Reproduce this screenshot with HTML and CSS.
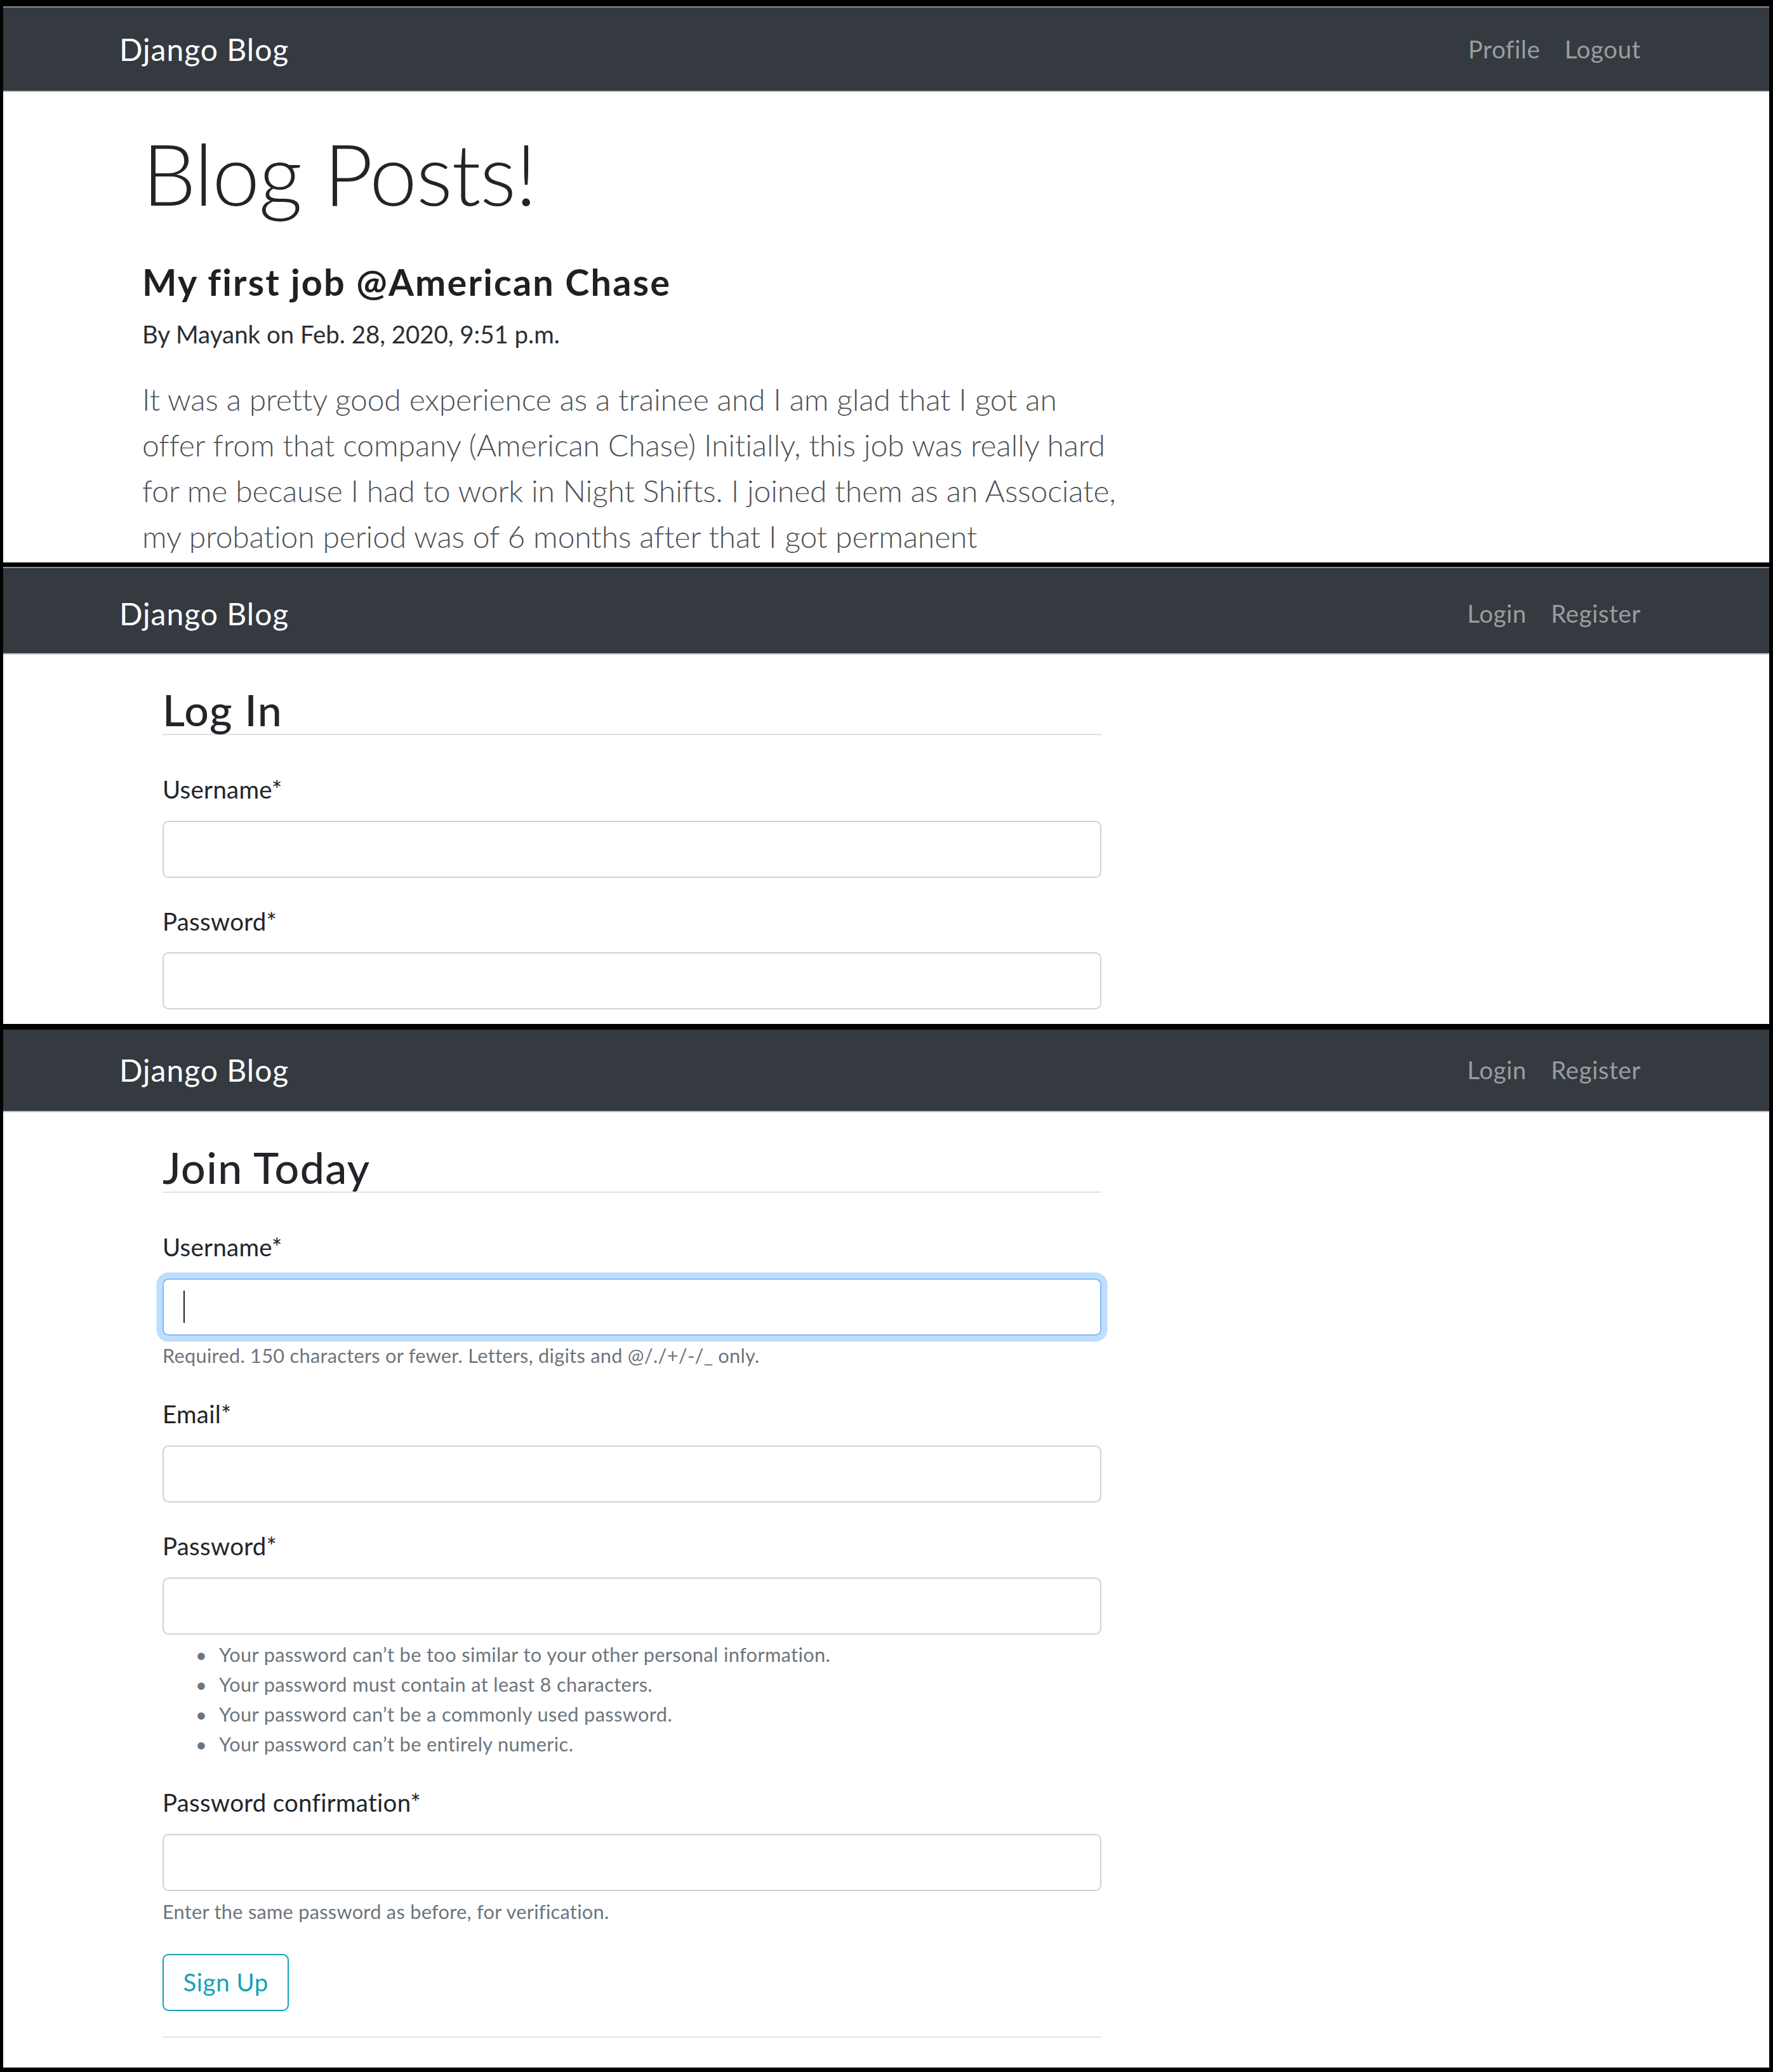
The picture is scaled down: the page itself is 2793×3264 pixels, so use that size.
FILE: index.html
```html
<!DOCTYPE html>
<html lang="en">
<head>
<meta charset="utf-8">
<title>Django Blog</title>
<link rel="stylesheet" href="styles.css">
</head>
<body>
<div class="collage">

  <section class="shot shot-home">
    <nav class="navbar nav-home">
      <a class="brand" href="#">Django Blog</a>
      <ul class="nav-links">
        <li><a href="#">Profile</a></li>
        <li><a href="#">Logout</a></li>
      </ul>
    </nav>
    <main class="home-content">
      <h1 class="display">Blog Posts!</h1>
      <article class="post">
        <h2 class="post-title">My first job @American Chase</h2>
        <p class="post-meta">By Mayank on Feb. 28, 2020, 9:51 p.m.</p>
        <p class="lead">It was a pretty good experience as a trainee and I am glad that I got an<br>offer from that company (American Chase) Initially, this job was really hard<br>for me because I had to work in Night Shifts. I joined them as an Associate,<br>my probation period was of 6 months after that I got permanent</p>
      </article>
    </main>
  </section>

  <section class="shot shot-login">
    <nav class="navbar nav-login">
      <a class="brand" href="#">Django Blog</a>
      <ul class="nav-links">
        <li><a href="#">Login</a></li>
        <li><a href="#">Register</a></li>
      </ul>
    </nav>
    <main class="form-content">
      <form class="auth-form">
        <fieldset class="fields">
          <legend class="form-legend">Log In</legend>
          <div class="form-group">
            <label class="form-label">Username*</label>
            <input class="form-control" type="text">
          </div>
          <div class="form-group">
            <label class="form-label">Password*</label>
            <input class="form-control" type="password">
          </div>
        </fieldset>
      </form>
    </main>
  </section>

  <section class="shot shot-register">
    <nav class="navbar nav-register">
      <a class="brand" href="#">Django Blog</a>
      <ul class="nav-links">
        <li><a href="#">Login</a></li>
        <li><a href="#">Register</a></li>
      </ul>
    </nav>
    <main class="form-content">
      <form class="auth-form">
        <fieldset class="fields">
          <legend class="form-legend">Join Today</legend>
          <div class="form-group">
            <label class="form-label">Username*</label>
            <div class="form-control is-focused"><span class="caret"></span></div>
            <small class="form-text">Required. 150 characters or fewer. Letters, digits and @/./+/-/_ only.</small>
          </div>
          <div class="form-group">
            <label class="form-label">Email*</label>
            <input class="form-control" type="email">
          </div>
          <div class="form-group">
            <label class="form-label">Password*</label>
            <input class="form-control" type="password">
            <small class="form-text">
              <ul class="help-list">
                <li>Your password can’t be too similar to your other personal information.</li>
                <li>Your password must contain at least 8 characters.</li>
                <li>Your password can’t be a commonly used password.</li>
                <li>Your password can’t be entirely numeric.</li>
              </ul>
            </small>
          </div>
          <div class="form-group">
            <label class="form-label">Password confirmation*</label>
            <input class="form-control" type="password">
            <small class="form-text">Enter the same password as before, for verification.</small>
          </div>
        </fieldset>
        <div class="form-group form-actions">
          <button class="btn-outline-info" type="button">Sign Up</button>
        </div>
      </form>
      <div class="form-footer"></div>
    </main>
  </section>

</div>
</body>
</html>
```

FILE: styles.css
```css
* {
  box-sizing: border-box;
}

html, body {
  margin: 0;
  padding: 0;
}

body {
  width: 2793px;
  height: 3264px;
  overflow: hidden;
  background: #000;
  font-family: Lato, "Open Sans", sans-serif;
  color: #212529;
}

.collage {
  display: flex;
  flex-direction: column;
  padding: 10px 6px 7px 5px;
}

.shot {
  background: #fff;
  overflow: hidden;
}

.shot-home { height: 876px; }
.shot-login { height: 720px; margin-top: 7px; }
.shot-register { height: 1635px; margin-top: 9px; }

/* Navbar */
.navbar {
  display: flex;
  align-items: center;
  justify-content: space-between;
  background: #343a40;
  padding: 0 183px 0 183px;
  border-bottom: 2px solid #b9bcbf;
}

.nav-home { height: 135px; border-top: 2px solid #8d9195; }
.nav-login { height: 138px; padding-top: 10px; border-top: 2px solid #8d9195; }
.nav-register { height: 130px; }

.brand {
  font-size: 48px;
  line-height: 72px;
  letter-spacing: 1px;
  color: #fff;
  text-decoration: none;
}

.nav-links {
  display: flex;
  list-style: none;
  margin: 0;
  padding: 0;
}

.nav-links a {
  display: block;
  padding: 0 19.2px;
  font-size: 38.4px;
  line-height: 57.6px;
  letter-spacing: 0.6px;
  color: rgba(255, 255, 255, 0.5);
  text-decoration: none;
}

/* Home */
.home-content {
  padding: 47px 0 0 219px;
}

.display {
  margin: 0 0 56px;
  font-size: 134.4px;
  font-weight: 300;
  line-height: 1.2;
  letter-spacing: -1.4px;
  color: #212529;
}

.post-title {
  margin: 0 0 20px;
  font-size: 57.6px;
  font-weight: 700;
  line-height: 1.2;
  letter-spacing: 2.2px;
  color: #1d2124;
}

.post-meta {
  margin: 0 0 37.5px;
  font-size: 38.4px;
  line-height: 57.6px;
  color: #2b2f33;
}

.lead {
  margin: 0;
  font-size: 48px;
  font-weight: 300;
  line-height: 72px;
  letter-spacing: -0.1px;
  color: #4d5155;
  white-space: nowrap;
}

/* Forms */
.form-content {
  padding: 50px 0 0 251px;
  width: 1730px;
}

.fields {
  margin: 0;
  padding: 0;
  border: 0;
  min-width: 0;
}

.form-legend {
  display: block;
  width: 100%;
  padding: 0;
  margin: 0 0 57.6px;
  font-size: 68px;
  font-weight: 500;
  line-height: 74.6px;
  letter-spacing: 1.4px;
  color: #212529;
  border-bottom: 2.4px solid #dee2e6;
}

.form-group {
  margin-bottom: 40px;
}

.form-label {
  display: block;
  margin-bottom: 20px;
  font-size: 38.4px;
  line-height: 57.6px;
  letter-spacing: 0.3px;
  color: #212529;
}

.form-control {
  display: flex;
  align-items: center;
  width: 100%;
  height: 90px;
  margin: 0;
  padding: 0 0 0 31px;
  background: #fff;
  border: 2.4px solid #ced4da;
  border-radius: 9.6px;
  font-family: inherit;
  font-size: 38.4px;
  outline: none;
}

.is-focused {
  border-color: #80bdff;
  box-shadow: 0 0 0 9.6px rgba(0, 123, 255, 0.25);
}

.caret {
  display: block;
  width: 2.4px;
  height: 51px;
  background: #212529;
}

.form-text {
  display: block;
  margin-top: 9.6px;
  font-size: 30.7px;
  line-height: 46px;
  letter-spacing: 0.3px;
  color: #6c757d;
}

.help-list {
  margin: 0;
  padding: 0 0 0 89px;
  list-style: none;
  letter-spacing: 0.4px;
}

.help-list li {
  line-height: 46.8px;
}

.help-list li::before {
  content: "•";
  display: inline-block;
  width: 37px;
  margin-left: -37px;
}

.form-actions {
  margin-top: 3px;
  margin-bottom: 40px;
}

.btn-outline-info {
  display: inline-block;
  padding: 14.4px 30.5px;
  font-family: inherit;
  font-size: 38.4px;
  line-height: 57.6px;
  letter-spacing: 0.6px;
  color: #17a2b8;
  background: transparent;
  border: 2.4px solid #17a2b8;
  border-radius: 9.6px;
}

.form-footer {
  border-top: 2.4px solid rgba(0, 0, 0, 0.1);
  height: 40px;
}
```
